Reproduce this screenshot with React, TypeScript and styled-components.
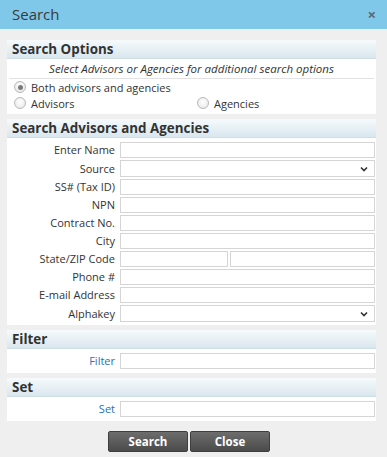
import React from "react";
import styled, { createGlobalStyle } from "styled-components";

const Global = createGlobalStyle`
  html, body { margin: 0; padding: 0; }
  body {
    font-family: "Open Sans", "Liberation Sans", Arial, sans-serif;
    background: #efefef;
    color: #333;
  }
  * { box-sizing: border-box; }
`;

const Dialog = styled.div`
  width: 387px;
  height: 457px;
  background: #efefef;
  display: flex;
  flex-direction: column;
  overflow: hidden;
`;

const TitleBar = styled.div`
  height: 29px;
  background: #7fc8ea;
  display: flex;
  align-items: center;
  justify-content: space-between;
  padding: 0 11px 1px 12px;
`;

const Title = styled.div`
  font-size: 15px;
  color: #3a3a3a;
`;

const CloseX = styled.div`
  font-size: 15px;
  font-weight: 700;
  color: #5a6a72;
  line-height: 1;
`;

const Body = styled.div`
  display: flex;
  flex-direction: column;
  gap: 5px;
  padding: 11px 11px 0 7px;
`;

const Panel = styled.div`
  background: #fff;
  display: flex;
  flex-direction: column;
`;

const PanelHeader = styled.div`
  height: 19px;
  background: linear-gradient(#f6fafc, #d9e7ee);
  border-bottom: 1px solid #cfdde4;
  font-weight: 700;
  font-size: 13.4px;
  line-height: 18px;
  padding-left: 5px;
  color: #333;
`;

const Hint = styled.div`
  font-style: italic;
  font-size: 11.5px;
  text-align: center;
  height: 20px;
  line-height: 20px;
  border-bottom: 1px solid #e2e2e2;
  margin: 0 2px;
`;

const RadioGrid = styled.div`
  display: grid;
  grid-template-columns: 183px 1fr;
  padding: 0 0 3px 7px;
`;

const RadioLabel = styled.label<{ $full?: boolean }>`
  display: flex;
  align-items: center;
  gap: 5px;
  font-size: 11px;
  height: 16px;
  grid-column: ${(p) => (p.$full ? "1 / span 2" : "auto")};
`;

const Radio = styled.input.attrs({ type: "radio" })`
  appearance: none;
  margin: 0;
  width: 12px;
  height: 12px;
  border-radius: 50%;
  border: 1px solid #b9b9b9;
  background: radial-gradient(circle at 50% 40%, #ffffff, #e4e4e4);
  display: grid;
  place-items: center;
  &:checked::after {
    content: "";
    width: 5px;
    height: 5px;
    border-radius: 50%;
    background: #7a7a7a;
  }
`;

const FormGrid = styled.div<{ $pad: string }>`
  display: grid;
  grid-template-columns: 108px 1fr;
  column-gap: 5px;
  row-gap: 2px;
  padding: ${(p) => p.$pad};
  padding-right: 1px;
`;

const Label = styled.div<{ $link?: boolean }>`
  text-align: right;
  font-size: 11px;
  line-height: 16px;
  white-space: nowrap;
  color: ${(p) => (p.$link ? "#2b72b8" : "#333")};
  align-self: center;
`;

const TextInput = styled.input`
  height: 16px;
  border: 1px solid #d5d5d5;
  background: #fff;
  width: 100%;
  margin: 0;
  padding: 0 3px;
  font-size: 11px;
  outline: none;
`;

const Pair = styled.div`
  display: grid;
  grid-template-columns: 108px 1fr;
  gap: 2px;
`;

const SelectBox = styled.div`
  height: 17px;
  border: 1px solid #d5d5d5;
  background: #fff;
  display: flex;
  align-items: center;
  justify-content: flex-end;
  padding-right: 6px;
`;

const Buttons = styled.div`
  display: flex;
  justify-content: center;
  gap: 2px;
  margin-top: 5px;
  padding-right: 5px;
`;

const Button = styled.button`
  width: 80px;
  height: 21px;
  border: 1px solid #3e3e3e;
  border-radius: 2px;
  background: linear-gradient(#6d6d6d, #4b4b4b);
  color: #fff;
  font-family: "Open Sans", "Liberation Sans", Arial, sans-serif;
  font-weight: 700;
  font-size: 11.5px;
  padding: 0;
  line-height: 19px;
`;

const Chevron = () => (
  <svg width="8" height="6" viewBox="0 0 8 6">
    <path d="M1 1.5 L4 4.5 L7 1.5" fill="none" stroke="#333" strokeWidth="1.6" />
  </svg>
);

const Select = () => (
  <SelectBox>
    <Chevron />
  </SelectBox>
);

const fields: { label: string; kind: "text" | "select" | "pair" }[] = [
  { label: "Enter Name", kind: "text" },
  { label: "Source", kind: "select" },
  { label: "SS# (Tax ID)", kind: "text" },
  { label: "NPN", kind: "text" },
  { label: "Contract No.", kind: "text" },
  { label: "City", kind: "text" },
  { label: "State/ZIP Code", kind: "pair" },
  { label: "Phone #", kind: "text" },
  { label: "E-mail Address", kind: "text" },
  { label: "Alphakey", kind: "select" },
];

export default function App() {
  return (
    <>
      <Global />
      <Dialog>
        <TitleBar>
          <Title>Search</Title>
          <CloseX>×</CloseX>
        </TitleBar>
        <Body>
          <Panel>
            <PanelHeader>Search Options</PanelHeader>
            <Hint>Select Advisors or Agencies for additional search options</Hint>
            <RadioGrid>
              <RadioLabel $full>
                <Radio name="scope" defaultChecked />
                Both advisors and agencies
              </RadioLabel>
              <RadioLabel>
                <Radio name="scope" />
                Advisors
              </RadioLabel>
              <RadioLabel>
                <Radio name="scope" />
                Agencies
              </RadioLabel>
            </RadioGrid>
          </Panel>

          <Panel>
            <PanelHeader>Search Advisors and Agencies</PanelHeader>
            <FormGrid $pad="4px 0 3px 0">
              {fields.map((f) => (
                <React.Fragment key={f.label}>
                  <Label>{f.label}</Label>
                  {f.kind === "text" && <TextInput />}
                  {f.kind === "select" && <Select />}
                  {f.kind === "pair" && (
                    <Pair>
                      <TextInput />
                      <TextInput />
                    </Pair>
                  )}
                </React.Fragment>
              ))}
            </FormGrid>
          </Panel>

          <Panel>
            <PanelHeader>Filter</PanelHeader>
            <FormGrid $pad="4px 0 4px 0">
              <Label $link>Filter</Label>
              <TextInput />
            </FormGrid>
          </Panel>

          <Panel>
            <PanelHeader>Set</PanelHeader>
            <FormGrid $pad="4px 0 4px 0">
              <Label $link>Set</Label>
              <TextInput />
            </FormGrid>
          </Panel>

          <Buttons>
            <Button>Search</Button>
            <Button>Close</Button>
          </Buttons>
        </Body>
      </Dialog>
    </>
  );
}
